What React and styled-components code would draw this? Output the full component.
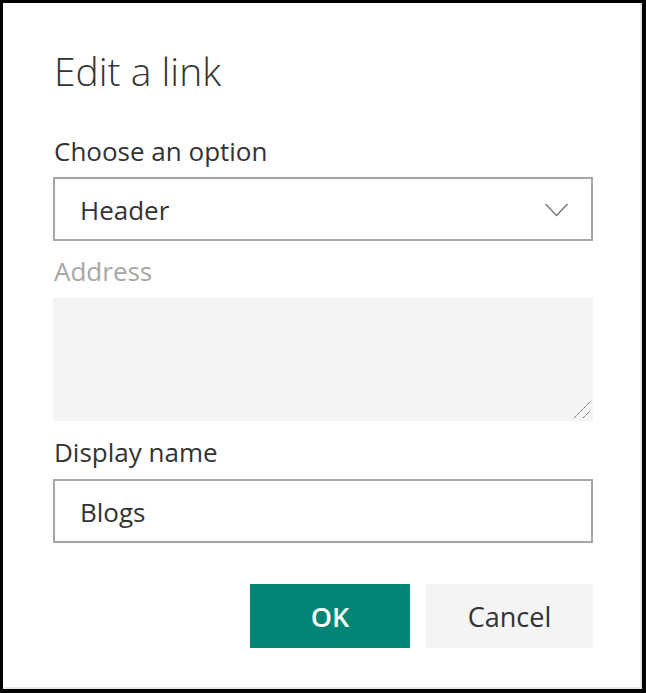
import React from "react";
import styled, { createGlobalStyle } from "styled-components";

const GlobalStyle = createGlobalStyle`
  html, body {
    margin: 0;
    padding: 0;
    background: #000;
  }
  * {
    box-sizing: border-box;
  }
`;

const Frame = styled.div`
  width: 646px;
  height: 693px;
  border-style: solid;
  border-color: #000;
  border-width: 3px 4px 4px 3px;
  background: #fff;
`;

const Dialog = styled.div`
  height: 100%;
  padding: 40px 49px 0 50px;
  box-shadow: inset -2px -2px 0 #e6e6e6;
  font-family: "Open Sans", "Liberation Sans", sans-serif;
  color: #333;
  display: flex;
  flex-direction: column;
`;

const Title = styled.h1`
  margin: 0 0 0 1px;
  font-size: 39px;
  line-height: 56px;
  font-weight: 300;
  color: #333;
`;

const Label = styled.label`
  display: block;
  margin: ${(p) => p.$top || 0}px 0 0 1px;
  font-size: 26px;
  line-height: 34px;
  font-weight: 400;
  color: ${(p) => (p.$disabled ? "#a6a6a6" : "#333")};
`;

const Box = styled.div`
  margin-top: ${(p) => p.$top || 0}px;
  height: 64px;
  border: 2px solid #a6a6a6;
  background: #fff;
  display: flex;
  align-items: center;
  justify-content: space-between;
  padding: 2px 23px 0 25px;
  font-size: 26px;
  color: #333;
`;

const Chevron = () => (
  <svg width="23" height="14" viewBox="0 0 23 14">
    <path d="M0.5 1 L11.5 12.5 L22.5 1" fill="none" stroke="#777" strokeWidth="1.4" />
  </svg>
);

const Area = styled.div`
  position: relative;
  margin-top: 10px;
  height: 123px;
  background: #f4f4f4;
`;

const Grip = styled.svg`
  position: absolute;
  right: 2px;
  bottom: 2px;
`;

const Actions = styled.div`
  margin-top: 41px;
  display: flex;
  justify-content: flex-end;
  gap: 16px;
`;

const Button = styled.button`
  height: 64px;
  width: ${(p) => p.$w}px;
  border: none;
  font-family: "Open Sans", "Liberation Sans", sans-serif;
  font-size: 27px;
  font-weight: ${(p) => (p.$primary ? 600 : 400)};
  color: ${(p) => (p.$primary ? "#fff" : "#333")};
  background: ${(p) => (p.$primary ? "#028575" : "#f4f4f4")};
  padding: 0;
`;

export default function App() {
  return (
    <>
      <GlobalStyle />
      <Frame>
        <Dialog>
          <Title>Edit a link</Title>
          <Label $top={35}>Choose an option</Label>
          <Box $top={9}>
            <span>Header</span>
            <Chevron />
          </Box>
          <Label $top={13} $disabled>
            Address
          </Label>
          <Area>
            <Grip width="18" height="18" viewBox="0 0 18 18">
              <path d="M1 17 L17 1 M10 17 L17 10" stroke="#444" strokeWidth="1" strokeDasharray="1.2 0.8" />
            </Grip>
          </Area>
          <Label $top={14}>Display name</Label>
          <Box $top={10}>
            <span>Blogs</span>
          </Box>
          <Actions>
            <Button $primary $w={160}>OK</Button>
            <Button $w={167}>Cancel</Button>
          </Actions>
        </Dialog>
      </Frame>
    </>
  );
}
